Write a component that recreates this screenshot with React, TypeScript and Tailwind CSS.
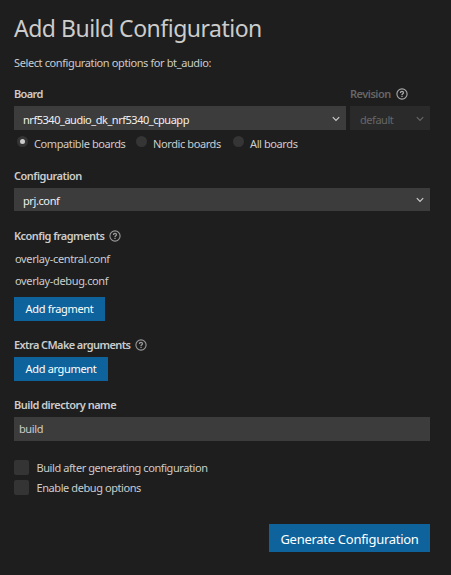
import React from "react";

const Help = ({ className = "" }: { className?: string }) => (
  <svg viewBox="0 0 12 12" className={`h-3 w-3 shrink-0 ${className}`} fill="none" stroke="currentColor">
    <circle cx="6" cy="6" r="5.1" strokeWidth="1.1" />
    <path d="M4.5 4.9C4.5 3.9 5.1 3.3 6 3.3s1.5.6 1.5 1.4c0 1-1.5 1.1-1.5 2.3" strokeWidth="1.3" />
    <path d="M6 7.8v1.3" strokeWidth="1.3" />
  </svg>
);

const Chevron = ({ className = "" }: { className?: string }) => (
  <svg viewBox="0 0 8 6" className={`h-1.5 w-2 shrink-0 ${className}`} fill="none" stroke="currentColor" strokeWidth="1.2">
    <path d="M.8 1.2 4 4.4 7.2 1.2" />
  </svg>
);

const Radio = ({ checked = false }: { checked?: boolean }) => (
  <span className="mb-[5px] flex h-[11px] w-[11px] shrink-0 items-center justify-center rounded-full bg-[#353535]">
    {checked && <span className="h-[5px] w-[5px] rounded-full bg-[#cccccc]" />}
  </span>
);

const Check = ({ label }: { label: string }) => (
  <label className="flex h-[15px] items-center">
    <span className="h-[15px] w-[15px] shrink-0 rounded-[2px] bg-[#343434]" />
    <span className="ml-[7.5px] tracking-[-0.42px]">{label}</span>
  </label>
);

export default function App() {
  return (
    <main className="flex h-[575px] w-[451px] flex-col overflow-hidden bg-[#1e1e1e] pr-[21px] pl-3.5 pt-3 font-['Noto_Sans',sans-serif] text-[11px] leading-4 whitespace-nowrap text-[#cccccc]">
      <h1 className="flex h-8 items-center text-[23px] tracking-[-0.5px]"><span>Add Build Configuration</span></h1>
      <p className="mt-[11px] h-4 tracking-[-0.39px]"><span>Select configuration options for bt_audio:</span></p>

      <div className="mt-[15px] flex gap-1">
        <section className="w-[332px]">
          <h2 className="h-4 font-semibold tracking-[-0.65px]"><span>Board</span></h2>
          <div className="mt-1 flex h-6 items-center justify-between bg-[#3c3c3c] pr-1.5 pl-[9px] pt-1 text-[#f0f0f0]">
            <span className="tracking-[-0.47px]">nrf5340_audio_dk_nrf5340_cpuapp</span>
            <Chevron className="mb-0.5 text-[#cccccc]" />
          </div>
        </section>
        <section className="w-20 text-[#666666]">
          <h2 className="flex h-4 items-center gap-[5px] font-semibold"><span className="tracking-[-0.5px]">Revision</span><Help className="text-[#aaaaaa]" /></h2>
          <div className="mt-1 flex h-6 items-center justify-between bg-[#2a2a2a] pr-1.5 pl-2.5 pt-1">
            <span className="tracking-[-0.45px]">default</span>
            <Chevron className="mb-0.5" />
          </div>
        </section>
      </div>

      <div className="mt-1.5 flex h-4 items-center pl-[3px] tracking-[-0.4px]">
        <label className="flex w-[119px] items-center gap-1.5"><Radio checked /><span>Compatible boards</span></label>
        <label className="flex w-[97px] items-center gap-1.5"><Radio /><span>Nordic boards</span></label>
        <label className="flex items-center gap-1.5"><Radio /><span>All boards</span></label>
      </div>

      <h2 className="mt-4 h-4 font-semibold tracking-[-0.5px]"><span>Configuration</span></h2>
      <div className="mt-1 flex h-[23px] items-center justify-between bg-[#3c3c3c] pr-1.5 pl-[9px] pt-0.5 text-[#f0f0f0]">
        <span className="tracking-[-0.4px]">prj.conf</span>
        <Chevron className="mb-px text-[#cccccc]" />
      </div>

      <h2 className="mt-[17px] flex h-4 items-center gap-[5px] font-semibold"><span className="tracking-[-0.52px]">Kconfig fragments</span><Help className="text-[#999999]" /></h2>
      <p className="mt-[7px] h-4 pl-px tracking-[-0.36px]"><span>overlay-central.conf</span></p>
      <p className="mt-1.5 h-4 pl-px tracking-[-0.36px]"><span>overlay-debug.conf</span></p>
      <button className="mt-2 flex h-6 w-[91px] items-center justify-center bg-[#0e639c] tracking-[-0.33px] text-white"><span>Add fragment</span></button>

      <h2 className="mt-4 flex h-4 items-center gap-[5px] font-semibold"><span className="tracking-[-0.6px]">Extra CMake arguments</span><Help className="text-[#999999]" /></h2>
      <button className="mt-1 flex h-6 w-[94px] items-center justify-center bg-[#0e639c] tracking-[-0.33px] text-white"><span>Add argument</span></button>

      <h2 className="mt-4 h-4 font-semibold tracking-[-0.5px]"><span>Build directory name</span></h2>
      <div className="mt-1 flex h-6 items-center bg-[#3c3c3c] pl-[5px] tracking-[-0.4px]"><span>build</span></div>

      <div className="mt-[19px] flex flex-col gap-[5px]">
        <Check label="Build after generating configuration" />
        <Check label="Enable debug options" />
      </div>

      <button className="mt-[29px] flex h-7 w-[161px] items-center justify-center self-end bg-[#0e639c] pt-0.5 text-[13px] tracking-[-0.28px] text-white"><span>Generate Configuration</span></button>
    </main>
  );
}
